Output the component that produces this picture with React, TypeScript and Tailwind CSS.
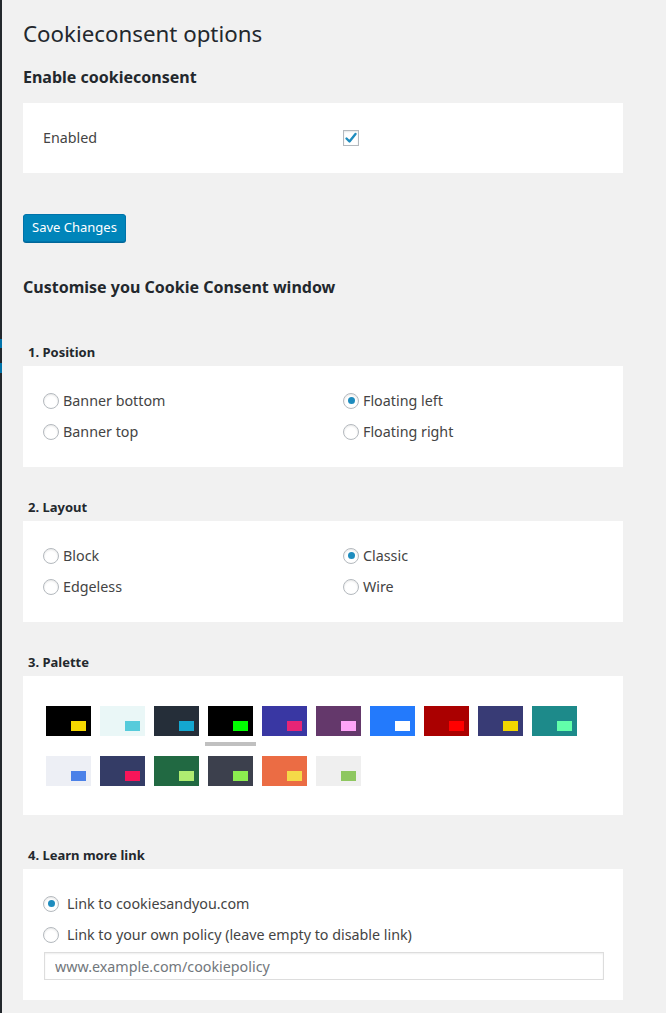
import { useState } from "react";

const font = { fontFamily: '"Noto Sans", "Open Sans", sans-serif' };

const palettes = [
  ["#000000", "#f5d800"],
  ["#eaf7f7", "#56cbdb"],
  ["#252e39", "#14a7d0"],
  ["#000000", "#00ff00"],
  ["#3937a3", "#e62576"],
  ["#64386b", "#ffa4f9"],
  ["#237afc", "#ffffff"],
  ["#aa0000", "#ff0000"],
  ["#383b75", "#f1d600"],
  ["#1d8a8a", "#62ffaa"],
  ["#edeff5", "#4b81e8"],
  ["#343c66", "#f71559"],
  ["#216942", "#afed71"],
  ["#3c404d", "#8bed4f"],
  ["#eb6c44", "#f5d948"],
  ["#efefef", "#8ec760"],
];

function Radio({ checked, onClick }: { checked: boolean; onClick: () => void }) {
  return (
    <span
      onClick={onClick}
      className="w-[16px] h-[16px] rounded-full border border-[#b4b9be] bg-white shadow-[inset_0_1px_2px_rgba(0,0,0,0.1)] flex items-center justify-center shrink-0 cursor-pointer"
    >
      {checked && <span className="w-[7px] h-[7px] rounded-full bg-[#1e8cbe]" />}
    </span>
  );
}

function RadioGroup({
  options,
  value,
  onChange,
}: {
  options: string[];
  value: string;
  onChange: (v: string) => void;
}) {
  // options go column-first: left col first two, right col next two
  const order = [options[0], options[2], options[1], options[3]];
  return (
    <div className="grid grid-cols-[300px_1fr] px-[20px]">
      {order.map((o) => (
        <label key={o} className="h-[31px] flex items-center gap-[4px] text-[14.3px] text-[#444] cursor-pointer">
          <Radio checked={value === o} onClick={() => onChange(o)} />
          {o}
        </label>
      ))}
    </div>
  );
}

function SectionLabel({ children }: { children: string }) {
  return (
    <h3 className="pl-[5px] text-[13px] leading-[18px] font-bold text-[#23282d]">{children}</h3>
  );
}

export default function App() {
  const [enabled, setEnabled] = useState(true);
  const [position, setPosition] = useState("Floating left");
  const [layout, setLayout] = useState("Classic");
  const [palette, setPalette] = useState(3);
  const [link, setLink] = useState<"default" | "own">("default");

  return (
    <div className="min-h-[1013px] bg-[#f1f1f1] flex" style={font}>
      <div className="w-[2px] bg-[#23282d] flex flex-col shrink-0">
        <div className="h-[339px]" />
        <div className="h-[9px] bg-[#0073aa]" />
        <div className="h-[15px]" />
        <div className="h-[10px] bg-[#0073aa]" />
      </div>

      <div className="pl-[21px] w-[621px] flex flex-col">
        <h1 className="mt-[19px] text-[22.3px] leading-[29px] text-[#23282d]">Cookieconsent options</h1>
        <h2 className="mt-[17px] text-[16px] leading-[24px] font-bold text-[#23282d]">Enable cookieconsent</h2>

        <div className="mt-[14px] h-[70px] bg-white grid grid-cols-[300px_1fr] px-[20px] items-center">
          <span className="text-[14.3px] text-[#444]">Enabled</span>
          <span
            onClick={() => setEnabled(!enabled)}
            className="w-[16px] h-[16px] border border-[#b4b9be] bg-white shadow-[inset_0_1px_2px_rgba(0,0,0,0.1)] flex items-center justify-center cursor-pointer"
          >
            {enabled && (
              <svg width="14" height="14" viewBox="0 0 14 14">
                <path d="M2.5 7.5 L5.5 10.5 L11.5 3" fill="none" stroke="#1e8cbe" strokeWidth="2.4" strokeLinecap="round" strokeLinejoin="round" />
              </svg>
            )}
          </span>
        </div>

        <div className="mt-[41px]">
          <button className="h-[28px] px-[8px] bg-[#0085ba] border border-[#0073aa] rounded-[3px] text-white text-[13px] shadow-[0_1px_0_#006799]">
            Save Changes
          </button>
        </div>

        <h2 className="mt-[33px] text-[16px] leading-[24px] font-bold text-[#23282d]">
          Customise you Cookie Consent window
        </h2>

        <div className="mt-[44px]">
          <SectionLabel>1. Position</SectionLabel>
        </div>
        <div className="mt-[5px] bg-white pt-[19px] pb-[20px]">
          <RadioGroup
            options={["Banner bottom", "Banner top", "Floating left", "Floating right"]}
            value={position}
            onChange={setPosition}
          />
        </div>

        <div className="mt-[31px]">
          <SectionLabel>2. Layout</SectionLabel>
        </div>
        <div className="mt-[5px] bg-white pt-[19px] pb-[20px]">
          <RadioGroup options={["Block", "Edgeless", "Classic", "Wire"]} value={layout} onChange={setLayout} />
        </div>

        <div className="mt-[31px]">
          <SectionLabel>3. Palette</SectionLabel>
        </div>
        <div className="mt-[5px] bg-white pt-[30px] pb-[29px] pl-[23px]">
          <div className="flex flex-wrap gap-x-[9px] gap-y-[20px] w-[531px]">
            {palettes.map(([bg, fg], i) => (
              <div
                key={i}
                onClick={() => setPalette(i)}
                className="relative w-[45px] h-[30px] flex items-end justify-end p-[5px] cursor-pointer"
                style={{ backgroundColor: bg }}
              >
                <span className="w-[15px] h-[10px]" style={{ backgroundColor: fg }} />
                {palette === i && (
                  <span className="absolute left-[-3px] bottom-[-10px] w-[51px] h-[4px] bg-[#c0c0c0]" />
                )}
              </div>
            ))}
          </div>
        </div>

        <div className="mt-[31px]">
          <SectionLabel>4. Learn more link</SectionLabel>
        </div>
        <div className="mt-[5px] bg-white pt-[19px] pb-[20px] px-[20px]">
          <label className="h-[31px] flex items-center gap-[8px] text-[14.3px] text-[#444] cursor-pointer">
            <Radio checked={link === "default"} onClick={() => setLink("default")} />
            Link to cookiesandyou.com
          </label>
          <label className="h-[31px] flex items-center gap-[8px] text-[14.3px] text-[#444] cursor-pointer">
            <Radio checked={link === "own"} onClick={() => setLink("own")} />
            Link to your own policy (leave empty to disable link)
          </label>
          <input
            placeholder="www.example.com/cookiepolicy"
            className="mt-[2px] ml-[1px] w-[560px] h-[28px] border border-[#ddd] bg-white px-[10px] text-[14.3px] text-[#32373c] placeholder:text-[#72777c] shadow-[inset_0_1px_2px_rgba(0,0,0,0.07)] outline-none"
          />
        </div>
      </div>
    </div>
  );
}
